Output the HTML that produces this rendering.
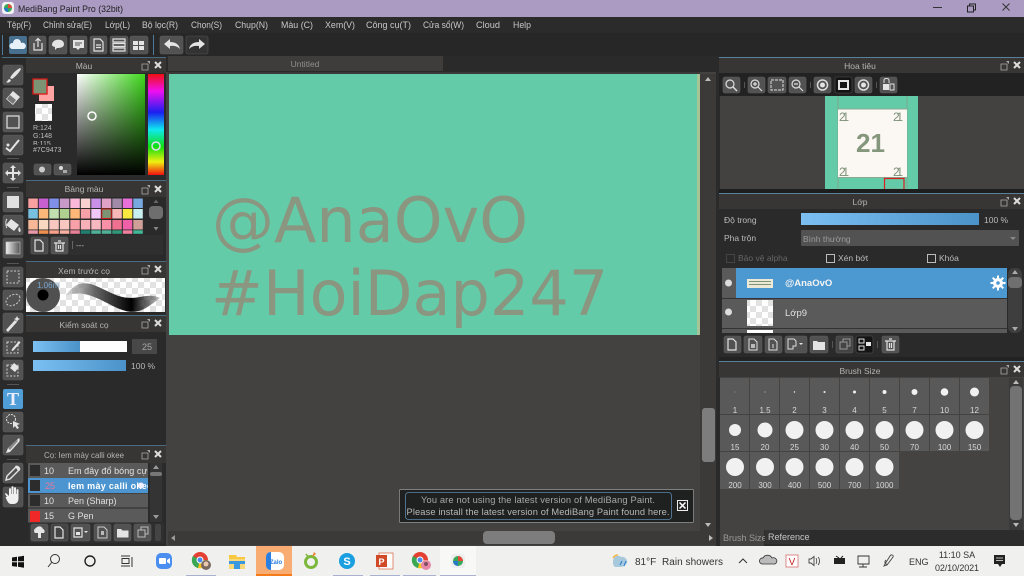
<!DOCTYPE html>
<html><head><meta charset="utf-8"><title>MediBang Paint Pro</title>
<style>
html,body{margin:0;padding:0;background:#2a2a2a;width:1024px;height:576px;overflow:hidden}
svg.root{display:block;filter:blur(.35px)}
text{font-family:"Liberation Sans","DejaVu Sans","Noto Sans CJK SC",sans-serif;font-size:9px;fill:#c4c4c4}
.d{font-family:"DejaVu Sans","Liberation Sans",sans-serif}
.m{fill:#c8c8c8;font-size:9px}
.h{fill:#b4b4b4;font-size:8.5px;text-anchor:middle}
.s{fill:#bdbdbd;font-size:8px}
.b{fill:#525252;stroke:#5e5e5e;stroke-width:.6}
.w{fill:#e4e4e4}
.l{fill:none;stroke:#e2e2e2;stroke-width:1.2}
.lab{fill:#d8d8d8;font-size:8px;text-anchor:middle}
.c{fill:#f1f1f1}
.tb{fill:#333;font-size:10px}
.n{font-size:12px;fill:#7f927a}
</style></head>
<body>
<svg class="root" width="1024" height="576" viewBox="0 0 1024 576" xmlns="http://www.w3.org/2000/svg">
<defs>
<linearGradient id="sl" x1="0" x2="1" y1="0" y2="0"><stop offset="0" stop-color="#7cc0f2"/><stop offset="1" stop-color="#4a92c9"/></linearGradient>
<linearGradient id="gw" x1="0" x2="1" y1="0" y2="0"><stop offset="0" stop-color="#fff"/><stop offset="1" stop-color="#3ed81c"/></linearGradient>
<linearGradient id="gb" x1="0" x2="0" y1="0" y2="1"><stop offset="0" stop-color="#000" stop-opacity="0"/><stop offset="1" stop-color="#000"/></linearGradient>
<linearGradient id="hue" x1="0" x2="0" y1="0" y2="1"><stop offset="0" stop-color="#f01010"/><stop offset=".17" stop-color="#f010f0"/><stop offset=".38" stop-color="#1a20f0"/><stop offset=".55" stop-color="#10e8f0"/><stop offset=".72" stop-color="#10e010"/><stop offset=".87" stop-color="#f0f010"/><stop offset="1" stop-color="#f01010"/></linearGradient>
<linearGradient id="gr" x1="0" x2="1" y1="0" y2="0"><stop offset="0" stop-color="#eee"/><stop offset="1" stop-color="#555"/></linearGradient>
<linearGradient id="stk" x1="0" x2="1" y1="0" y2="0"><stop offset="0" stop-color="#9a9a9a" stop-opacity=".4"/><stop offset=".3" stop-color="#666"/><stop offset=".7" stop-color="#000"/><stop offset="1" stop-color="#333" stop-opacity=".3"/></linearGradient>
<pattern id="chk" width="12" height="12" patternUnits="userSpaceOnUse"><rect width="12" height="12" fill="#fff"/><rect width="6" height="6" fill="#e2e2e2"/><rect x="6" y="6" width="6" height="6" fill="#e2e2e2"/></pattern>
<g id="pop"><path d="M0 2h5v6h-6v-6z" fill="none" stroke="#aaa" stroke-width=".8" transform="translate(1 1)"/><path d="M5 0h3v3z" fill="#aaa"/><path d="M13 1l6 6M19 1l-6 6" stroke="#ddd" stroke-width="2"/></g>
</defs>

<!-- base -->
<rect width="1024" height="576" fill="#2a2a2a"/>
<!-- title bar -->
<rect width="1024" height="17" fill="#ab9bc3"/>
<rect x="2" y="2" width="12" height="12" rx="3" fill="#f2f2f2"/>
<circle cx="8" cy="8" r="4" fill="#38a858"/><path d="M8 4a4 4 0 0 1 4 4h-4z" fill="#e84838"/><path d="M4 8a4 4 0 0 0 4 4v-4z" fill="#2878c8"/>
<text x="18" y="12" style="fill:#222;font-size:9.5px" textLength="105" lengthAdjust="spacingAndGlyphs">MediBang Paint Pro (32bit)</text>
<path d="M933 7.500h9" stroke="#333" stroke-width="1"/>
<path d="M967.500 6h6v6h-6zM969.500 6v-2h6v6h-2" fill="none" stroke="#222" stroke-width="1"/>
<path d="M1002.500 3.500l7 7M1009.500 3.500l-7 7" stroke="#333" stroke-width="1"/>

<!-- menu -->
<rect y="17" width="1024" height="16" fill="#2b2b2b"/>
<g class="menu">
<text class="m" x="7" y="28" textLength="24" lengthAdjust="spacingAndGlyphs">Tệp(F)</text>
<text class="m" x="43" y="28" textLength="49" lengthAdjust="spacingAndGlyphs">Chỉnh sửa(E)</text>
<text class="m" x="105" y="28" textLength="25" lengthAdjust="spacingAndGlyphs">Lớp(L)</text>
<text class="m" x="142" y="28" textLength="36" lengthAdjust="spacingAndGlyphs">Bộ lọc(R)</text>
<text class="m" x="191" y="28" textLength="31" lengthAdjust="spacingAndGlyphs">Chọn(S)</text>
<text class="m" x="235" y="28" textLength="33" lengthAdjust="spacingAndGlyphs">Chụp(N)</text>
<text class="m" x="281" y="28" textLength="32" lengthAdjust="spacingAndGlyphs">Màu (C)</text>
<text class="m" x="325" y="28" textLength="30" lengthAdjust="spacingAndGlyphs">Xem(V)</text>
<text class="m" x="366" y="28" textLength="45" lengthAdjust="spacingAndGlyphs">Công cụ(T)</text>
<text class="m" x="423" y="28" textLength="41" lengthAdjust="spacingAndGlyphs">Cửa sổ(W)</text>
<text class="m" x="476" y="28" textLength="24" lengthAdjust="spacingAndGlyphs">Cloud</text>
<text class="m" x="513" y="28" textLength="18" lengthAdjust="spacingAndGlyphs">Help</text>
</g>
<!-- toolbar -->
<rect y="33" width="1024" height="24" fill="#272727"/>
<rect x="2" y="35" width="1" height="20" fill="#4d7a98"/>
<rect x="153" y="35" width="1" height="20" fill="#4d7a98"/>
<rect x="9" y="36" width="18" height="18" rx="2" fill="#47708f"/>
<path d="M12 49a3 3 0 0 1 1-6 4 4 0 0 1 8 0 3 3 0 0 1 3 6z" fill="#e8f0f8"/>
<rect class="b" x="29" y="36" width="17" height="18" rx="2"/>
<path d="M34 43v7h8v-7M38 47v-8M35.500 41l2.500-2.500 2.500 2.500" class="l" />
<rect class="b" x="49" y="36" width="18" height="18" rx="2"/>
<path d="M52 45c0-7 12-7 12-1 0 4-5 4-7 4l-2 2v-3c-2-.5-3-1-3-2z" class="w"/>
<rect class="b" x="70" y="36" width="17" height="18" rx="2"/>
<path d="M73 40h11v8h-4l-2 2-2-2h-3z" class="w"/><path d="M75 43h7M75 45h5" stroke="#555"/>
<rect class="b" x="90" y="36" width="17" height="18" rx="2"/>
<path d="M94 39h6l3 3v9h-9z" class="l"/><path d="M96 45h5M96 47.500h5" class="l" stroke-width=".8"/>
<rect class="b" x="110" y="36" width="18" height="18" rx="2"/>
<path d="M113 39h12v3h-12zM113 43.500h12v3h-12zM113 48h12v3h-12z" class="l" stroke-width=".8"/>
<rect class="b" x="130" y="36" width="18" height="18" rx="2"/>
<path d="M133 41h5v4h-5zM139 41h5v4h-5zM133 46h5v4h-5zM139 46h5v4h-5z" class="w"/>
<rect class="b" x="160" y="36" width="23" height="18" rx="2"/>
<path d="M164 44l6-5v3c5 0 9 2 10 7-3-3-6-3.500-10-3v3z" class="w"/>
<rect x="186" y="36" width="22" height="18" rx="2" fill="#333" stroke="#555" stroke-width=".6"/>
<path d="M205 44l-6-5v3c-5 0-9 2-10 7 3-3 6-3.500 10-3v3z" class="w"/>

<!-- left tools bg -->
<rect y="57" width="26" height="489" fill="#2a2a2a"/>
<rect x="2" y="57" width="24" height="1" fill="#4a6a80"/>

<!-- tools -->
<rect class="b" x="3" y="65" width="20" height="20" rx="2"/>
<path d="M20 68c-4 2-8 6-10 10l2 1c3-2 7-6 9-10zM9 79c-1 1-2 3-3 3 1 1 4 1 5-2z" class="w"/>
<rect class="b" x="3" y="88" width="20" height="20" rx="2"/>
<path d="M13 91l7 6-7 8-7-6z" class="w"/><path d="M10 95l6 5-3 4-6-5z" fill="#777"/>
<rect class="b" x="3" y="112" width="20" height="20" rx="2"/>
<rect x="7" y="116" width="12" height="12" fill="none" stroke="#d8d8d8" stroke-width="1.300"/>
<rect class="b" x="3" y="135" width="20" height="20" rx="2"/>
<path d="M6 148l4 3 9-11" fill="none" stroke="#e4e4e4" stroke-width="2"/><circle cx="8" cy="145" r="1.500" class="w"/>
<rect x="7" y="158" width="12" height="1" fill="#555"/>
<rect class="b" x="3" y="163" width="20" height="20" rx="2"/>
<path d="M13 165l3 3h-2v4h4v-2l3 3-3 3v-2h-4v4h2l-3 3-3-3h2v-4h-4v2l-3-3 3-3v2h4v-4h-2z" class="w"/>
<rect x="7" y="187" width="12" height="1" fill="#555"/>
<rect class="b" x="3" y="192" width="20" height="20" rx="2"/>
<rect x="7" y="196" width="12" height="12" fill="#e0e0e0"/>
<rect class="b" x="3" y="215" width="20" height="20" rx="2"/>
<path d="M11 219l8 6-5 6-8-6z" class="w"/><path d="M7 219c-2 2-1 8 0 9" fill="none" stroke="#ddd"/><path d="M19 227c2 2 2 4 1 5-2 0-2-3-1-5z" class="w"/>
<rect class="b" x="3" y="238" width="20" height="20" rx="2"/>
<rect x="6" y="242" width="14" height="12" fill="url(#gr)" stroke="#ccc" stroke-width=".6"/>
<rect x="7" y="263" width="12" height="1" fill="#555"/>
<rect class="b" x="3" y="267" width="20" height="20" rx="2"/>
<rect x="7" y="271" width="12" height="12" fill="none" stroke="#ccc" stroke-dasharray="2 1.500"/>
<rect class="b" x="3" y="290" width="20" height="20" rx="2"/>
<ellipse cx="13" cy="300" rx="7.500" ry="5" transform="rotate(-30 13 300)" fill="none" stroke="#ccc" stroke-dasharray="2 1.500"/>
<rect class="b" x="3" y="313" width="20" height="20" rx="2"/>
<path d="M6 330l9-10 2 2-9 10z" class="w"/><path d="M17 316l1 2 2 1-2 1-1 2-1-2-2-1 2-1z" class="w"/>
<rect class="b" x="3" y="337" width="20" height="20" rx="2"/>
<rect x="7" y="342" width="11" height="11" fill="none" stroke="#ccc" stroke-dasharray="2 1.500"/><path d="M12 349l7-8 1.500 1.500-7 8-2 .5z" class="w"/>
<rect class="b" x="3" y="360" width="20" height="20" rx="2"/>
<rect x="7" y="365" width="11" height="11" fill="none" stroke="#ccc" stroke-dasharray="2 1.500"/><path d="M14 363l5 4-4 5-5-4z" class="w"/>
<rect x="7" y="384" width="12" height="1" fill="#555"/>
<rect x="3" y="389" width="20" height="20" rx="2" fill="#4f9ed8"/>
<text x="13" y="405" style="font-family:'Liberation Serif',serif;font-weight:bold;font-size:18px;fill:#eef;text-anchor:middle">T</text>
<rect class="b" x="3" y="412" width="20" height="20" rx="2"/>
<circle cx="11" cy="419" r="4.500" fill="none" stroke="#ddd" stroke-dasharray="2 1"/><path d="M13 421l7 3-3 1 2 3-2 1-2-3-2 2z" class="w"/>
<rect class="b" x="3" y="435" width="20" height="20" rx="2"/>
<path d="M19 438c1 1 1 3 0 4l-9 10-4 1 2-5z" class="w"/><path d="M8 448l9-8 1 1-8 9z" fill="#888"/>
<rect x="7" y="459" width="12" height="1" fill="#555"/>
<rect class="b" x="3" y="463" width="20" height="20" rx="2"/>
<path d="M16 467l3 3-9 9-4 1 1-4z" fill="none" stroke="#e4e4e4" stroke-width="1.400"/><path d="M15 466c2-1 4 0 5 2s-1 3-2 3z" class="w"/>
<rect class="b" x="3" y="487" width="20" height="20" rx="2"/>
<path d="M7 497l-2-3c0-1 1-1 2 0l2 2v-7c0-1 2-1 2 0v5h.5v-7c0-1 2-1 2 0v7h.5v-6c0-1 2-1 2 0v6h.5v-4c0-1 2-1 2 0v8c0 4-2 6-5 6h-2c-3 0-4-2-6-7z" fill="#f0f0f0"/>

<!-- Left panels -->
<rect x="26" y="57" width="142" height="489" fill="#2a2a2a"/>
<rect x="26" y="57" width="142" height="1" fill="#4a6a80"/>
<!-- Mau -->
<rect x="26" y="58" width="140" height="15" fill="#383635"/>
<text class="h" x="84" y="69">Màu</text>
<use href="#pop" x="142" y="61"/>
<rect x="39" y="86" width="15" height="15" fill="#ffa3a3"/>
<rect x="33" y="79" width="14" height="15" fill="#7c9473" stroke="#d81818" stroke-width="1.300"/>
<rect x="35" y="104" width="17" height="17" fill="url(#chk)"/>
<text class="s" x="33" y="130" style="font-size:7px">R:124</text>
<text class="s" x="33" y="138" style="font-size:7px">G:148</text>
<text class="s" x="33" y="146" style="font-size:7px">B:115</text>
<rect x="30" y="145" width="44" height="9" fill="#2a2a2a"/>
<text class="s" x="33" y="152" style="font-size:7px">#7C9473</text>
<rect class="b" x="34" y="164" width="17" height="11" rx="2"/><circle cx="42" cy="169.500" r="3" fill="#ccc"/>
<rect class="b" x="54" y="164" width="17" height="11" rx="2"/><circle cx="61" cy="168" r="2" fill="#ddd"/><rect x="63" y="170" width="4" height="3" fill="#aaa"/>
<rect x="77" y="74" width="68" height="101" fill="url(#gw)"/>
<rect x="77" y="74" width="68" height="101" fill="url(#gb)"/>
<circle cx="92" cy="116" r="4" fill="none" stroke="#fff" stroke-width="1.500"/>
<rect x="148" y="74" width="16" height="101" fill="url(#hue)"/>
<circle cx="156" cy="146" r="4" fill="none" stroke="#dde" stroke-width="1.500"/>

<!-- Bang mau -->
<rect x="26" y="180" width="140" height="1" fill="#4a6a80"/>
<rect x="26" y="181" width="140" height="16" fill="#383635"/>
<text class="h" x="84" y="192">Bảng màu</text>
<use href="#pop" x="142" y="185"/>
<g>
<rect x="28.300" y="198.500" width="9.500" height="9.500" fill="#f9a0a0"/><rect x="38.800" y="198.500" width="9.500" height="9.500" fill="#c860d0"/><rect x="49.300" y="198.500" width="9.500" height="9.500" fill="#8090e8"/><rect x="59.800" y="198.500" width="9.500" height="9.500" fill="#c89ac8"/><rect x="70.300" y="198.500" width="9.500" height="9.500" fill="#fbb8d8"/><rect x="80.800" y="198.500" width="9.500" height="9.500" fill="#f8d0d0"/><rect x="91.300" y="198.500" width="9.500" height="9.500" fill="#c890e8"/><rect x="101.800" y="198.500" width="9.500" height="9.500" fill="#e0a0c8"/><rect x="112.300" y="198.500" width="9.500" height="9.500" fill="#a08aa8"/><rect x="122.800" y="198.500" width="9.500" height="9.500" fill="#e870d8"/><rect x="133.300" y="198.500" width="9.500" height="9.500" fill="#78a8e0"/>
<rect x="28.300" y="209" width="9.500" height="9.500" fill="#78c0e0"/><rect x="38.800" y="209" width="9.500" height="9.500" fill="#fbb878"/><rect x="49.300" y="209" width="9.500" height="9.500" fill="#c0e0b0"/><rect x="59.800" y="209" width="9.500" height="9.500" fill="#b0d090"/><rect x="70.300" y="209" width="9.500" height="9.500" fill="#ffb878"/><rect x="80.800" y="209" width="9.500" height="9.500" fill="#f8a0a8"/><rect x="91.300" y="209" width="9.500" height="9.500" fill="#f0c8f8"/><rect x="101.800" y="209" width="9.500" height="9.500" fill="#7c9473" stroke="#c81818" stroke-width="1"/><rect x="112.300" y="209" width="9.500" height="9.500" fill="#f8b8b8"/><rect x="122.800" y="209" width="9.500" height="9.500" fill="#f8e840"/><rect x="133.300" y="209" width="9.500" height="9.500" fill="#c8f0f0"/>
<rect x="28.300" y="220" width="9.500" height="9.500" fill="#f8b898"/><rect x="38.800" y="220" width="9.500" height="9.500" fill="#f8d8c0"/><rect x="49.300" y="220" width="9.500" height="9.500" fill="#f8c8c0"/><rect x="59.800" y="220" width="9.500" height="9.500" fill="#f8c8c0"/><rect x="70.300" y="220" width="9.500" height="9.500" fill="#f8a0a8"/><rect x="80.800" y="220" width="9.500" height="9.500" fill="#f8b0b8"/><rect x="91.300" y="220" width="9.500" height="9.500" fill="#f8b8c0"/><rect x="101.800" y="220" width="9.500" height="9.500" fill="#f890a8"/><rect x="112.300" y="220" width="9.500" height="9.500" fill="#f07090"/><rect x="122.800" y="220" width="9.500" height="9.500" fill="#f060a8"/><rect x="133.300" y="220" width="9.500" height="9.500" fill="#d0a098"/>
<rect x="28.300" y="230.300" width="9.500" height="3.500" fill="#e898a8"/><rect x="38.800" y="230.300" width="9.500" height="3.500" fill="#f09050"/><rect x="49.300" y="230.300" width="9.500" height="3.500" fill="#f8a088"/><rect x="59.800" y="230.300" width="9.500" height="3.500" fill="#f8b0a0"/><rect x="70.300" y="230.300" width="9.500" height="3.500" fill="#e88098"/><rect x="80.800" y="230.300" width="9.500" height="3.500" fill="#208070"/><rect x="91.300" y="230.300" width="9.500" height="3.500" fill="#50b098"/><rect x="101.800" y="230.300" width="9.500" height="3.500" fill="#50b098"/><rect x="112.300" y="230.300" width="9.500" height="3.500" fill="#309878"/><rect x="122.800" y="230.300" width="9.500" height="3.500" fill="#f080a0"/><rect x="133.300" y="230.300" width="9.500" height="3.500" fill="#40b898"/>
</g>
<rect x="149" y="206" width="14" height="13" rx="4" fill="#6e6e6e"/>
<path d="M153.500 203l2.500-3.500 2.500 3.500z" fill="#666"/><path d="M153.500 227l2.500 3.500 2.500-3.500z" fill="#888"/>
<rect x="29" y="235" width="134" height="20" fill="#2f2f2f"/>
<rect class="b" x="31" y="237" width="17" height="17" rx="2" style="fill:#4a4a4a"/>
<path d="M35 240h5l3 3v8h-8z" class="l"/>
<rect class="b" x="51" y="237" width="17" height="17" rx="2"/>
<path d="M54 243h11M56 243v8h7v-8M58 241h3M58.500 245v4M60.500 245v4" class="l" stroke-width="1"/>
<rect x="72" y="241" width="1" height="8" fill="#666"/>
<text class="s" x="76" y="248">---</text>

<!-- Preview -->
<rect x="26" y="261" width="140" height="1" fill="#4a6a80"/>
<rect x="26" y="262" width="140" height="16" fill="#383635"/>
<text class="h" x="84" y="274">Xem trước cọ</text>
<use href="#pop" x="142" y="265"/>
<rect x="26" y="278" width="139" height="34" fill="url(#chk)"/>
<circle cx="43" cy="295" r="17" fill="#505050"/>
<circle cx="43" cy="295" r="5.500" fill="#000"/>
<text x="37" y="288" style="font-size:8px;fill:#7aa8d0">1.06m</text>
<path d="M66 295c16-22 30-8 50 0 20 8 30-4 44 3-14 10-22 20-45 9-18-9-30-17-49-12z" fill="url(#stk)"/>

<!-- Kiem soat -->
<rect x="26" y="315" width="140" height="1" fill="#4a6a80"/>
<rect x="26" y="316" width="140" height="16" fill="#383635"/>
<text class="h" x="84" y="328">Kiểm soát cọ</text>
<use href="#pop" x="142" y="319"/>
<rect x="33" y="341" width="94" height="11" fill="#fff"/>
<rect x="33" y="341" width="47" height="11" fill="url(#sl)"/>
<rect x="132" y="339" width="25" height="15" rx="1" fill="#484848"/>
<text x="147" y="350" style="font-size:9px;fill:#a8a8a8;text-anchor:middle">25</text>
<rect x="33" y="360" width="93" height="11" fill="url(#sl)"/>
<text x="131" y="369" style="font-size:8.500px;fill:#b8b8b8">100 %</text>

<!-- Brush list -->
<rect x="26" y="445" width="140" height="1" fill="#4a6a80"/>
<rect x="26" y="446" width="140" height="17" fill="#383635"/>
<text class="h" x="84" y="458" textLength="80" lengthAdjust="spacingAndGlyphs" style="text-anchor:middle">Cọ: Iem mày calli okee</text>
<use href="#pop" x="142" y="450"/>
<rect x="28" y="463" width="120" height="15" fill="#5a5a5a"/>
<rect x="28" y="478" width="120" height="15" fill="#4c95d0"/>
<rect x="28" y="493.500" width="120" height="14" fill="#5a5a5a"/>
<rect x="28" y="508.500" width="120" height="14" fill="#5a5a5a"/>
<rect x="30" y="465" width="10" height="11" fill="#2c2c2c"/>
<rect x="30" y="480" width="10" height="11" fill="#2c2c2c"/>
<rect x="30" y="495" width="10" height="11" fill="#2c2c2c"/>
<rect x="30" y="511" width="10" height="11" fill="#f02828"/>
<text x="44" y="474" style="fill:#e0e0e0">10</text>
<text x="45" y="489" style="fill:#e87898">25</text>
<text x="44" y="504" style="fill:#e0e0e0">10</text>
<text x="44" y="519" style="fill:#e0e0e0">15</text>
<svg x="28" y="463" width="120" height="60" viewBox="28 463 120 60">
<text x="68" y="474" style="fill:#e0e0e0" textLength="84" lengthAdjust="spacing">Em đây đổ bóng cực</text>
<text x="68" y="489" style="fill:#fff;font-weight:bold" textLength="84">Iem mày calli okee</text>
<text x="68" y="504" style="fill:#e0e0e0">Pen (Sharp)</text>
<text x="68" y="519" style="fill:#e0e0e0">G Pen</text>
</svg>
<circle cx="141" cy="485.500" r="3" fill="#eef"/>
<rect x="150" y="463" width="12" height="59" fill="#343434"/>
<rect x="150" y="472" width="12" height="4" rx="2" fill="#777"/>
<path d="M153 469l3-4 3 4zM153 515l3 4 3-4z" fill="#999"/>
<rect x="29" y="523" width="135" height="20" fill="#2f2f2f"/>
<rect class="b" x="31" y="524" width="17" height="17" rx="2"/>
<path d="M35 533a3 3 0 0 1 1-5 4 4 0 0 1 7 1 2.500 2.500 0 0 1 1 4h-3v5h-3v-5z" class="w"/>
<rect class="b" x="51" y="524" width="17" height="17" rx="2" style="fill:#444"/>
<path d="M55 527h5l3 3v8h-8z" class="l"/>
<rect class="b" x="71" y="524" width="19" height="17" rx="2"/>
<path d="M74 528h8v9h-8z" class="l" stroke-width=".8"/><rect x="76" y="532" width="4" height="3" class="w"/><path d="M84 531l2 2 2-2z" class="w"/>
<rect class="b" x="94" y="524" width="17" height="17" rx="2"/>
<path d="M98 527h6l3 3v8h-9z" fill="none" stroke="#ccc"/><rect x="101" y="531" width="3" height="4" fill="#bbb"/>
<rect class="b" x="114" y="524" width="17" height="17" rx="2"/>
<path d="M117 529h4l1.500 1.500h6v7h-11.500z" class="w"/>
<rect class="b" x="134" y="524" width="17" height="17" rx="2"/>
<path d="M138 530h7v7h-7zM141 530v-3h7v7h-3" fill="none" stroke="#bbb"/>
<rect x="155" y="524" width="6" height="17" rx="2" fill="#444"/>

<!-- center area -->
<rect x="166" y="57" width="553" height="489" fill="#434241"/>
<rect x="166" y="56" width="553" height="16" fill="#2a2a2a"/>
<rect x="168" y="56" width="275" height="15" rx="1" fill="#3e3d3c"/>
<text x="305" y="67" style="font-size:8.500px;fill:#8f8f8f;text-anchor:middle">Untitled</text>
<rect x="168" y="72" width="532" height="2" fill="#3a3938"/>
<rect x="169" y="74" width="528" height="261" fill="#64cba8"/>
<rect x="697" y="74" width="3" height="261" fill="#a8c496"/>
<text class="d" x="212" y="242" style="font-size:62px;fill:#8a9680">@AnaOvO</text>
<text class="d" x="211" y="315" style="font-size:62px;fill:#8a9680">#HoiDap247</text>
<!-- canvas scroll -->
<rect x="700" y="74" width="16" height="458" fill="#3b3a39"/>
<rect x="702" y="408" width="13" height="54" rx="3" fill="#7d7d7d"/>
<path d="M705 81l3-4 3 4z" fill="#bbb"/><path d="M705 523l3 4 3-4z" fill="#bbb"/>
<rect x="168" y="531" width="548" height="14" fill="#3b3a39"/>
<rect x="483" y="531" width="72" height="13" rx="4" fill="#7d7d7d"/>
<path d="M175 535l-4 3 4 3z" fill="#999"/><path d="M709 535l4 3-4 3z" fill="#bbb"/>

<!-- notification -->
<rect x="399.500" y="489.500" width="294" height="33" rx="1" fill="#1f2020" stroke="#999" stroke-width=".7"/>
<rect x="405.500" y="492.500" width="266" height="27" rx="3" fill="#1f2020" stroke="#5a88ac" stroke-width=".8"/>
<text x="538" y="503" style="font-size:9.300px;fill:#a8a8a8;text-anchor:middle" textLength="234" lengthAdjust="spacing">You are not using the latest version of MediBang Paint.</text>
<text x="538" y="515" style="font-size:9.300px;fill:#b8b8b8;text-anchor:middle" textLength="263" lengthAdjust="spacing">Please install the latest version of MediBang Paint found here.</text>
<rect x="677.500" y="500.500" width="10" height="10" fill="#222" stroke="#eee"/>
<path d="M679.500 502.500l6 6M685.500 502.500l-6 6" stroke="#fff" stroke-width="1.500"/>

<!-- right panels -->
<rect x="716" y="57" width="308" height="489" fill="#2a2a2a"/>
<rect x="719" y="57" width="305" height="1" fill="#5a7f98"/>
<rect x="719" y="58" width="305" height="15" fill="#383635"/>
<text class="h" x="860" y="69">Hoa tiêu</text>
<use href="#pop" x="1001" y="61"/>
<rect x="719" y="73" width="305" height="23" fill="#222"/>
<rect class="b" x="723" y="77" width="17" height="16" rx="2"/><circle cx="730" cy="84" r="4" fill="none" stroke="#ddd" stroke-width="1.200"/><path d="M733 87l4 4" stroke="#ddd" stroke-width="1.500"/>
<rect x="744" y="82" width="1" height="6" fill="#555"/>
<rect class="b" x="748" y="77" width="17" height="16" rx="2"/><circle cx="755" cy="84" r="4" fill="none" stroke="#ddd" stroke-width="1.200"/><path d="M758 87l4 4M753 84h4M755 82v4" stroke="#ddd" stroke-width="1.200"/>
<rect class="b" x="768" y="77" width="18" height="16" rx="2"/><rect x="771" y="80" width="12" height="10" fill="none" stroke="#ddd" stroke-dasharray="3 1"/>
<rect class="b" x="789" y="77" width="17" height="16" rx="2"/><circle cx="796" cy="84" r="4" fill="none" stroke="#ddd" stroke-width="1.200"/><path d="M799 87l4 4M794 84h4" stroke="#ddd" stroke-width="1.200"/>
<rect x="810" y="82" width="1" height="6" fill="#555"/>
<rect class="b" x="814" y="77" width="17" height="16" rx="2"/><circle cx="822.500" cy="85" r="5" fill="none" stroke="#ddd" stroke-width="1.500"/><circle cx="822.500" cy="85" r="2.500" class="w"/>
<rect x="835" y="77" width="17" height="16" rx="2" fill="#141414" stroke="#555" stroke-width=".6"/><path d="M838 80h11v10h-11z" class="w"/><path d="M840 82h7v6h-7z" fill="#141414"/>
<rect class="b" x="855" y="77" width="17" height="16" rx="2"/><circle cx="863.500" cy="85" r="5" fill="none" stroke="#ddd" stroke-width="1.500"/><circle cx="863.500" cy="85" r="2.500" class="w"/>
<rect x="876" y="82" width="1" height="6" fill="#555"/>
<rect class="b" x="880" y="77" width="17" height="16" rx="2"/><path d="M883 84h6v6h-6z" class="w"/><path d="M890 84h4v6h-4zM884 83v-3c0-2 5-2 5 0v3" fill="none" stroke="#ddd"/>
<!-- nav preview -->
<rect x="720" y="96" width="304" height="93" fill="#434241"/>
<rect x="825" y="96" width="93" height="93" fill="#64cba8"/>
<rect x="837.500" y="96" width="1" height="93" fill="#7aa88e"/>
<rect x="906.500" y="96" width="1" height="93" fill="#7aa88e"/>
<rect x="838" y="109" width="69" height="68" fill="#fbf8f4"/>
<rect x="838" y="108.500" width="69" height="1" fill="#8aa890"/>
<rect x="838" y="177" width="69" height="1" fill="#8aa890"/>
<text class="n" x="839" y="121" textLength="10">21</text>
<text class="n" x="893" y="121" textLength="10">21</text>
<text class="n" x="839" y="176" textLength="10">21</text>
<text class="n" x="893" y="176" textLength="10">21</text>
<text x="856" y="152" style="font-size:26px;font-weight:bold;fill:#84967c" textLength="29" lengthAdjust="spacingAndGlyphs">21</text>
<rect x="884.500" y="178.500" width="19.500" height="11" fill="none" stroke="#d82020" stroke-width="1.200"/>
<rect x="719" y="189" width="305" height="4" fill="#1e1e1e"/>

<!-- layer -->
<rect x="719" y="193" width="305" height="1" fill="#5a7f98"/>
<rect x="719" y="194" width="305" height="15" fill="#383635"/>
<text class="h" x="860" y="205">Lớp</text>
<use href="#pop" x="1001" y="197"/>
<text x="724" y="223" style="font-size:8.500px;fill:#bbb">Độ trong</text>
<rect x="801" y="213" width="178" height="12" fill="url(#sl)"/>
<text x="984" y="223" style="font-size:8.500px;fill:#bbb">100 %</text>
<text x="724" y="241" style="font-size:8.500px;fill:#bbb">Pha trộn</text>
<rect x="801" y="230" width="218" height="16" rx="1" fill="#525252"/>
<text x="803" y="242" style="font-size:8.500px;fill:#9a9a9a">Bình thường</text>
<path d="M1010 237l3 3 3-3z" fill="#888"/>
<rect x="726.500" y="254.500" width="8" height="8" fill="none" stroke="#444"/>
<text x="738" y="261" style="font-size:8.500px;fill:#666">Bảo vệ alpha</text>
<rect x="826.500" y="254.500" width="8" height="8" fill="none" stroke="#bbb"/>
<text x="838" y="261" style="font-size:8.500px;fill:#bbb">Xén bớt</text>
<rect x="927.500" y="254.500" width="8" height="8" fill="none" stroke="#bbb"/>
<text x="939" y="261" style="font-size:8.500px;fill:#bbb">Khóa</text>
<rect x="722" y="268" width="285" height="62" fill="#5a5a5a"/>
<rect x="736" y="268" width="271" height="30" fill="#4c98d0"/>
<rect x="722" y="298" width="285" height="1" fill="#333"/>
<rect x="722" y="328" width="285" height="1" fill="#333"/>
<rect x="722" y="329" width="285" height="4" fill="#5a5a5a"/>
<circle cx="728.500" cy="283" r="3.500" fill="#ddd"/>
<circle cx="728.500" cy="312" r="3.500" fill="#ddd"/>
<rect x="747" y="279" width="26" height="9" fill="#ece9d8"/>
<rect x="749" y="281" width="22" height="1" fill="#7c9473"/><rect x="749" y="284" width="22" height="1" fill="#7c9473"/>
<rect x="747" y="300" width="26" height="26" fill="url(#chk)"/>
<rect x="747" y="330" width="26" height="3" fill="#fff"/>
<text x="785" y="286" style="font-size:9.500px;font-weight:bold;fill:#f4f4f4">@AnaOvO</text>
<text x="785" y="316" style="font-size:9.500px;fill:#e0e0e0">Lớp9</text>
<circle cx="998" cy="283" r="5" fill="#fff"/>
<path d="M998 275.500v15M990.500 283h15M992.700 277.700l10.600 10.600M1003.300 277.700l-10.600 10.600" stroke="#fff" stroke-width="2"/>
<circle cx="998" cy="283" r="1.800" fill="#4c98d0"/>
<rect x="1008" y="268" width="14" height="65" rx="6" fill="#3e3e3e"/>
<rect x="1008" y="277" width="14" height="11" rx="4" fill="#6f6f6f"/>
<path d="M1012 274l3-4 3 4zM1012 327l3 4 3-4z" fill="#aaa"/>
<rect x="719" y="334" width="305" height="23" fill="#2a2a2a"/>
<rect class="b" x="724" y="336" width="17" height="17" rx="2"/><path d="M728 339h5l3 3v8h-8z" class="l"/>
<rect class="b" x="744" y="336" width="18" height="17" rx="2"/><path d="M749 339h5l3 3v8h-8z" fill="none" stroke="#ddd"/><rect x="751" y="344" width="4" height="4" fill="#bbb"/>
<rect class="b" x="765" y="336" width="17" height="17" rx="2"/><path d="M769 339h5l3 3v8h-8z" fill="none" stroke="#ddd"/><path d="M773 344v4" stroke="#ddd"/>
<rect class="b" x="785" y="336" width="22" height="17" rx="2"/><path d="M788 339h6l2 2v5h-3v3h-5z" fill="none" stroke="#ddd"/><path d="M799 343l2 2 2-2z" class="w"/>
<rect class="b" x="810" y="336" width="18" height="17" rx="2"/><path d="M813 341h4l1 1h7v8h-12z" class="w"/>
<rect x="832" y="341" width="1" height="7" fill="#555"/>
<rect class="b" x="836" y="336" width="17" height="17" rx="2" style="fill:#444"/><path d="M840 342h7v7h-7zM843 342v-3h7v7h-3" fill="none" stroke="#999"/>
<rect x="856" y="336" width="17" height="17" rx="2" fill="#141414" stroke="#555" stroke-width=".6"/><rect x="859" y="339" width="5" height="4" fill="none" stroke="#ddd"/><rect x="859" y="346" width="5" height="4" fill="none" stroke="#ddd"/><rect x="866" y="342" width="5" height="4" class="w"/>
<rect x="877" y="341" width="1" height="7" fill="#555"/>
<rect class="b" x="882" y="336" width="17" height="17" rx="2"/><path d="M885 341h11M887 341v9h7v-9M889 339h3M889.500 343v5M891.500 343v5" class="l" stroke-width="1"/>

<!-- Brush Size -->
<rect x="719" y="357" width="305" height="4" fill="#222"/>
<rect x="719" y="361" width="305" height="1" fill="#5a7f98"/>
<rect x="719" y="362" width="305" height="15" fill="#383635"/>
<text class="h" x="860" y="374">Brush Size</text>
<use href="#pop" x="1001" y="365"/>
<rect x="720" y="377" width="304" height="153" fill="#444342"/>
<g fill="#595959">
<rect x="720" y="378" width="29" height="36"/><rect x="750" y="378" width="29" height="36"/><rect x="780" y="378" width="29" height="36"/><rect x="810" y="378" width="29" height="36"/><rect x="840" y="378" width="29" height="36"/><rect x="870" y="378" width="29" height="36"/><rect x="900" y="378" width="29" height="36"/><rect x="930" y="378" width="29" height="36"/><rect x="960" y="378" width="29" height="36"/>
<rect x="720" y="415" width="29" height="36"/><rect x="750" y="415" width="29" height="36"/><rect x="780" y="415" width="29" height="36"/><rect x="810" y="415" width="29" height="36"/><rect x="840" y="415" width="29" height="36"/><rect x="870" y="415" width="29" height="36"/><rect x="900" y="415" width="29" height="36"/><rect x="930" y="415" width="29" height="36"/><rect x="960" y="415" width="29" height="36"/>
<rect x="720" y="452" width="29" height="37"/><rect x="750" y="452" width="29" height="37"/><rect x="780" y="452" width="29" height="37"/><rect x="810" y="452" width="29" height="37"/><rect x="840" y="452" width="29" height="37"/><rect x="870" y="452" width="29" height="37"/>
</g>
<circle class="c" cx="735" cy="392" r=".4"/><circle class="c" cx="765" cy="392" r=".5"/><circle class="c" cx="794.500" cy="392" r=".7"/><circle class="c" cx="824.500" cy="392" r="1"/><circle class="c" cx="854.500" cy="392" r="1.500"/><circle class="c" cx="884.500" cy="392" r="2"/><circle class="c" cx="914.500" cy="392" r="3"/><circle class="c" cx="944.500" cy="392" r="3.800"/><circle class="c" cx="974.500" cy="392" r="4.500"/>
<circle class="c" cx="735" cy="430" r="6"/><circle class="c" cx="765" cy="430" r="7.500"/><circle class="c" cx="794.500" cy="430" r="9"/><circle class="c" cx="824.500" cy="430" r="9"/><circle class="c" cx="854.500" cy="430" r="9"/><circle class="c" cx="884.500" cy="430" r="9"/><circle class="c" cx="914.500" cy="430" r="9"/><circle class="c" cx="944.500" cy="430" r="9"/><circle class="c" cx="974.500" cy="430" r="9"/>
<circle class="c" cx="735" cy="467" r="9"/><circle class="c" cx="765" cy="467" r="9"/><circle class="c" cx="794.500" cy="467" r="9"/><circle class="c" cx="824.500" cy="467" r="9"/><circle class="c" cx="854.500" cy="467" r="9"/><circle class="c" cx="884.500" cy="467" r="9"/>
<text class="lab" x="735" y="413">1</text><text class="lab" x="765" y="413">1.5</text><text class="lab" x="794.500" y="413">2</text><text class="lab" x="824.500" y="413">3</text><text class="lab" x="854.500" y="413">4</text><text class="lab" x="884.500" y="413">5</text><text class="lab" x="914.500" y="413">7</text><text class="lab" x="944.500" y="413">10</text><text class="lab" x="974.500" y="413">12</text>
<text class="lab" x="735" y="450">15</text><text class="lab" x="765" y="450">20</text><text class="lab" x="794.500" y="450">25</text><text class="lab" x="824.500" y="450">30</text><text class="lab" x="854.500" y="450">40</text><text class="lab" x="884.500" y="450">50</text><text class="lab" x="914.500" y="450">70</text><text class="lab" x="944.500" y="450">100</text><text class="lab" x="974.500" y="450">150</text>
<text class="lab" x="735" y="488">200</text><text class="lab" x="765" y="488">300</text><text class="lab" x="794.500" y="488">400</text><text class="lab" x="824.500" y="488">500</text><text class="lab" x="854.500" y="488">700</text><text class="lab" x="884.500" y="488">1000</text>
<rect x="1009" y="378" width="14" height="152" fill="#3a3a3a"/>
<rect x="1010" y="386" width="12" height="134" rx="4" fill="#737373"/>
<path d="M1013 384l3-4 3 4zM1013 523l3 4 3-4z" fill="#bbb"/>
<rect x="719" y="530" width="305" height="16" fill="#2c2c2c"/>
<rect x="720" y="530" width="44" height="16" fill="#444342"/>
<text x="723" y="541" style="font-size:9px;fill:#999">Brush Size</text>
<rect x="765" y="530" width="45" height="14" fill="#333"/>
<text x="768" y="540" style="font-size:9px;fill:#c4c4c4">Reference</text>

<!-- taskbar -->
<rect y="546" width="1024" height="30" fill="#f0f0ee"/>
<path d="M12 557.500l5-.7v4.500h-5zM18 556.700l6-.9v5.500h-6zM12 562.300h5v4.500l-5-.7zM18 562.300h6v5.400l-6-.9z" fill="#111"/>
<circle cx="55" cy="559" r="4.500" fill="none" stroke="#333"/><path d="M52 562l-4 5" stroke="#333"/>
<circle cx="90" cy="561" r="5" fill="none" stroke="#222" stroke-width="1.400"/>
<path d="M121 556h9M121 566h9M122 558.500h7v5h-7zM132 557v10" fill="none" stroke="#333"/>
<rect x="156" y="553" width="16" height="16" rx="5" fill="#4a8ff0"/><rect x="159" y="558" width="7" height="6" rx="1" fill="#fff"/><path d="M167 560l3-2v6l-3-2z" fill="#fff"/>
<!-- chrome -->
<circle cx="200" cy="560" r="8" fill="#e34133"/><path d="M200 560l-7-4a8 8 0 0 0 5 12z" fill="#38a853"/><path d="M200 560l8 0a8 8 0 0 1-10 8z" fill="#f8c51c"/><circle cx="200" cy="560" r="3" fill="#4a8bf0" stroke="#fff"/>
<circle cx="206" cy="565" r="5" fill="#786860"/><circle cx="206" cy="564" r="2.500" fill="#e8c8b0"/>
<!-- explorer -->
<path d="M229 555h7l1 2h8v4h-16z" fill="#f8c840"/><path d="M229 559h16v10h-16z" fill="#f8d878"/><path d="M229 561h16v3h-5v5h-6v-5h-5z" fill="#3a98e0"/>
<!-- zalo -->
<rect x="256" y="546" width="36" height="30" fill="#f8ac72"/>
<rect x="256" y="574" width="36" height="2" fill="#f47a1a"/>
<rect x="266" y="552" width="18" height="18" rx="5" fill="#fff"/><path d="M266 557c0-3 2-5 5-5v18c-3 0-5-2-5-5z" fill="#2b7fe0"/>
<text x="276" y="564" style="font-size:6px;font-weight:bold;fill:#2b7fe0;text-anchor:middle">Zalo</text>
<!-- coccoc -->
<circle cx="311" cy="562" r="5.500" fill="none" stroke="#7cb83c" stroke-width="3"/><path d="M314 552l-2 5 4-3z" fill="#f08030"/><path d="M306 554l3 4" stroke="#7cb83c" stroke-width="1.500"/>
<!-- skype -->
<circle cx="347" cy="561" r="8" fill="#1a9fe0"/>
<text x="347" y="565" style="font-size:11px;font-weight:bold;fill:#fff;text-anchor:middle">S</text>
<!-- ppt -->
<rect x="379" y="553" width="14" height="16" fill="#fff" stroke="#d86040" stroke-width=".7"/><rect x="376" y="555" width="11" height="12" fill="#d04a28"/>
<text x="381.500" y="565" style="font-size:9px;font-weight:bold;fill:#fff;text-anchor:middle">P</text>
<!-- chrome 2 -->
<circle cx="420" cy="560" r="8" fill="#e34133"/><path d="M420 560l-7-4a8 8 0 0 0 5 12z" fill="#38a853"/><path d="M420 560l8 0a8 8 0 0 1-10 8z" fill="#f8c51c"/><circle cx="420" cy="560" r="3" fill="#4a8bf0" stroke="#fff"/>
<circle cx="426" cy="565" r="5" fill="#e888a8"/><circle cx="426" cy="564" r="2" fill="#805060"/>
<!-- medibang -->
<rect x="440" y="546" width="36" height="30" fill="#f8f8f7"/>
<rect x="451" y="554" width="14" height="14" rx="3" fill="#eeeeee"/>
<circle cx="458" cy="561" r="5" fill="#38a858"/><path d="M458 556a5 5 0 0 1 5 5h-5z" fill="#e84838"/><path d="M453 561a5 5 0 0 0 5 5v-5z" fill="#2878c8"/>
<!-- underlines -->
<g fill="#aab0d0"><rect x="186" y="575" width="30" height="1"/><rect x="333" y="575" width="30" height="1"/><rect x="370" y="575" width="30" height="1"/><rect x="403" y="575" width="33" height="1"/><rect x="440" y="575" width="36" height="1"/></g>
<!-- weather -->
<path d="M613 561c0-4 5-7 8-4 4-1 7 3 6 6-2 3-4 4-7 4h-5c-2-1-2-4-2-6z" fill="#a8c8dc"/><path d="M613 558c1-2 3-3 5-3" stroke="#f0b840" fill="none" stroke-width="1.500"/><path d="M622 561l-2 4M626 561l-2 5" stroke="#3888d0" stroke-width="1.200"/>
<text class="tb" x="635" y="565">81°F</text>
<text class="tb" x="662" y="565" textLength="61">Rain showers</text>
<path d="M739 563l4-4 4 4" fill="none" stroke="#333" stroke-width="1"/>
<path d="M762 564a3 3 0 0 1 1-6 5 5 0 0 1 9 0 3 3 0 0 1 3 6z" fill="#bbb" stroke="#333" stroke-width=".8"/>
<rect x="786" y="555" width="12" height="12" fill="#fff" stroke="#d88"/>
<text x="792" y="565" style="font-size:10px;fill:#d02020;text-anchor:middle">V</text>
<path d="M809 559h2l3-2.500v9l-3-2.500h-2z" fill="none" stroke="#444" stroke-width=".9"/><path d="M816 558c1 2 1 4 0 6M818 557c2 2 2 6 0 8" fill="none" stroke="#444" stroke-width=".8"/>
<rect x="834" y="558" width="11" height="6" fill="#222"/><path d="M836 556l3 2M841 558l2-2" stroke="#222"/>
<path d="M858 556h11v8h-11zM863 564v3M859 567h8M858 556v8" fill="none" stroke="#333" stroke-width=".9"/>
<path d="M884 566l3-1 6-8c1-2-2-3-3-1l-5 8zM886 560c-2 2-1 5 2 4" fill="none" stroke="#444" stroke-width=".9"/>
<text x="909" y="565" style="font-size:9px;fill:#333">ENG</text>
<text x="957" y="558" style="font-size:9px;fill:#333;text-anchor:middle">11:10 SA</text>
<text x="957" y="571" style="font-size:9px;fill:#333;text-anchor:middle" textLength="44">02/10/2021</text>
<path d="M994 555h11v9h-3l-2 3-2-3h-4z" fill="#222"/><path d="M996 558h7M996 560.500h7" stroke="#f0f0ee" stroke-width=".8"/>
</svg>
</body></html>
